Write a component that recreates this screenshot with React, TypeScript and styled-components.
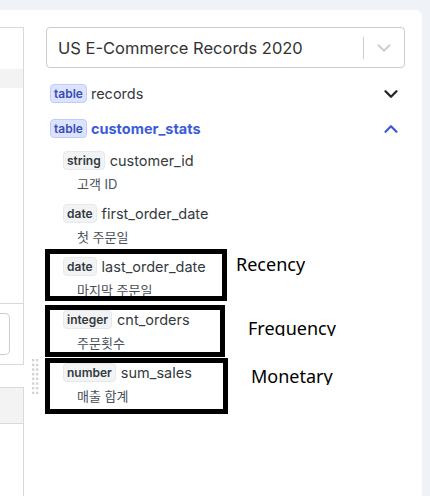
import React from "react";
import styled, { createGlobalStyle } from "styled-components";
import { ChevronDown, ChevronUp } from "lucide-react";

const Global = createGlobalStyle`
  html, body { margin: 0; padding: 0; background: #eff2f6; }
  body { font-family: Inter, "Noto Sans CJK KR", sans-serif; color: #343a40; }
  * { box-sizing: border-box; }
`;

const Page = styled.div`
  padding: 10px 8px 0 0;
  height: 496px;
  overflow: hidden;
`;

const Card = styled.div`
  position: relative;
  height: 486px;
  background: #ffffff;
  border-top-right-radius: 6px;
  display: flex;
`;

const LeftPanel = styled.div`
  width: 24px;
  flex: none;
  padding-top: 17px;
  display: flex;
  flex-direction: column;
`;

const UpperBox = styled.div`
  height: 338px;
  border: 1px solid #d9d9d9;
  border-left: none;
  padding-top: 41px;
  display: flex;
  flex-direction: column;
`;

const GreyRow = styled.div<{ $h: number }>`
  height: ${(p) => p.$h}px;
  background: #f3f3f3;
`;

const Divider = styled.div`
  margin-top: 215px;
  border-top: 1px solid #d9d9d9;
`;

const MiniInput = styled.div`
  margin-top: 9px;
  width: 10px;
  height: 42px;
  border: 1px solid #cccccc;
  border-left: none;
  border-radius: 0 5px 5px 0;
`;

const LowerBox = styled.div`
  margin-top: 22px;
  flex: 1;
  border-top: 1px solid #d9d9d9;
  border-right: 1px solid #d9d9d9;
`;

const LowerHead = styled.div`
  height: 36px;
  background: #f3f3f3;
  border-bottom: 1px solid #d9d9d9;
`;

const Gutter = styled.div`
  width: 22px;
  flex: none;
  padding: 349px 0 0 8px;
`;

const SchemaPanel = styled.div`
  flex: 1;
  padding: 17px 17px 0 0;
  display: flex;
  flex-direction: column;
`;

const Select = styled.div`
  height: 41px;
  border: 1px solid #cccccc;
  border-radius: 4px;
  display: flex;
  align-items: center;
  padding-left: 11px;
`;

const SelectValue = styled.div`
  flex: 1;
  font-size: 16.5px;
  color: #333333;
`;

const Separator = styled.div`
  width: 1px;
  height: 22px;
  background: #cccccc;
`;

const Indicator = styled.div`
  width: 40px;
  display: flex;
  justify-content: center;
  color: #cccccc;
`;

const TableRow = styled.div`
  margin-top: 16px;
  padding-left: 4px;
  height: 19px;
  display: flex;
  align-items: center;
  gap: 4px;
`;

const Badge = styled.span<{ $kind: "table" | "field" }>`
  display: inline-flex;
  align-items: center;
  height: 19px;
  padding: 0 3px;
  border-radius: 4px;
  font-size: 12px;
  font-weight: 600;
  border: 1px solid ${(p) => (p.$kind === "table" ? "#bfcbff" : "#e6e8eb")};
  background: ${(p) => (p.$kind === "table" ? "#dbe3ff" : "#f1f3f5")};
  color: ${(p) => (p.$kind === "table" ? "#3a4cb5" : "#343a40")};
`;

const TableName = styled.span<{ $active?: boolean }>`
  flex: 1;
  font-size: 14.5px;
  font-weight: ${(p) => (p.$active ? 700 : 400)};
  color: ${(p) => (p.$active ? "#3b5bdb" : "#343a40")};
`;

const Toggle = styled.span<{ $active?: boolean }>`
  display: flex;
  margin-right: 3px;
  color: ${(p) => (p.$active ? "#3b5bdb" : "#212529")};
`;

const FieldList = styled.div`
  margin-top: 13px;
  padding-left: 17px;
  display: flex;
  flex-direction: column;
  gap: 11px;
`;

const Field = styled.div`
  display: flex;
  flex-direction: column;
`;

const FieldHead = styled.div`
  height: 19px;
  display: flex;
  align-items: center;
  gap: 5px;
`;

const FieldName = styled.span`
  font-size: 14.5px;
  color: #343a40;
`;

const FieldDesc = styled.div`
  margin-top: 5px;
  padding-left: 14px;
  height: 18px;
  line-height: 18px;
  font-size: 13px;
  color: #495057;
  font-family: Inter, "Noto Sans CJK KR", sans-serif;
`;

const HighlightBox = styled.div`
  position: absolute;
  border: 5px solid #000000;
  pointer-events: none;
`;

const Note = styled.span`
  position: absolute;
  font-family: "Noto Sans", "Noto Sans CJK KR", sans-serif;
  font-size: 18px;
  line-height: 22px;
  color: #000000;
  overflow: hidden;
  white-space: nowrap;
`;

const fields = [
  { type: "string", name: "customer_id", desc: "고객 ID" },
  { type: "date", name: "first_order_date", desc: "첫 주문일" },
  { type: "date", name: "last_order_date", desc: "마지막 주문일" },
  { type: "integer", name: "cnt_orders", desc: "주문횟수" },
  { type: "number", name: "sum_sales", desc: "매출 합계" },
];

const boxes = [
  { left: 45, top: 239, width: 182, height: 52 },
  { left: 45, top: 295, width: 180, height: 52 },
  { left: 45, top: 348, width: 183, height: 56 },
];

const notes = [
  { text: "Recency", left: 236, top: 243, height: 22 },
  { text: "Frequency", left: 248, top: 307, height: 19 },
  { text: "Monetary", left: 251, top: 355, height: 20 },
];

function DragHandle() {
  const dots = [];
  for (let r = 0; r < 8; r++) {
    for (let c = 0; c < 2; c++) {
      dots.push(<rect key={`${r}-${c}`} x={c * 4} y={r * 4.67} width={2.4} height={2.4} fill="#d4d4d4" />);
    }
  }
  return (
    <svg width="7" height="35" viewBox="0 0 7 35">
      {dots}
    </svg>
  );
}

export default function App() {
  return (
    <>
      <Global />
      <Page>
        <Card>
          <LeftPanel>
            <UpperBox>
              <GreyRow $h={19} />
              <Divider />
              <MiniInput />
            </UpperBox>
            <LowerBox>
              <LowerHead />
            </LowerBox>
          </LeftPanel>
          <Gutter>
            <DragHandle />
          </Gutter>
          <SchemaPanel>
            <Select>
              <SelectValue>US E-Commerce Records 2020</SelectValue>
              <Separator />
              <Indicator>
                <ChevronDown size={22} strokeWidth={2} />
              </Indicator>
            </Select>
            <TableRow>
              <Badge $kind="table">table</Badge>
              <TableName>records</TableName>
              <Toggle>
                <ChevronDown size={22} strokeWidth={2.5} />
              </Toggle>
            </TableRow>
            <TableRow>
              <Badge $kind="table">table</Badge>
              <TableName $active>customer_stats</TableName>
              <Toggle $active>
                <ChevronUp size={22} strokeWidth={2.5} />
              </Toggle>
            </TableRow>
            <FieldList>
              {fields.map((f) => (
                <Field key={f.name}>
                  <FieldHead>
                    <Badge $kind="field">{f.type}</Badge>
                    <FieldName>{f.name}</FieldName>
                  </FieldHead>
                  <FieldDesc>{f.desc}</FieldDesc>
                </Field>
              ))}
            </FieldList>
          </SchemaPanel>
          {boxes.map((b, i) => (
            <HighlightBox key={i} style={{ left: b.left, top: b.top, width: b.width, height: b.height }} />
          ))}
          {notes.map((n) => (
            <Note key={n.text} style={{ left: n.left, top: n.top, height: n.height }}>
              {n.text}
            </Note>
          ))}
        </Card>
      </Page>
    </>
  );
}
